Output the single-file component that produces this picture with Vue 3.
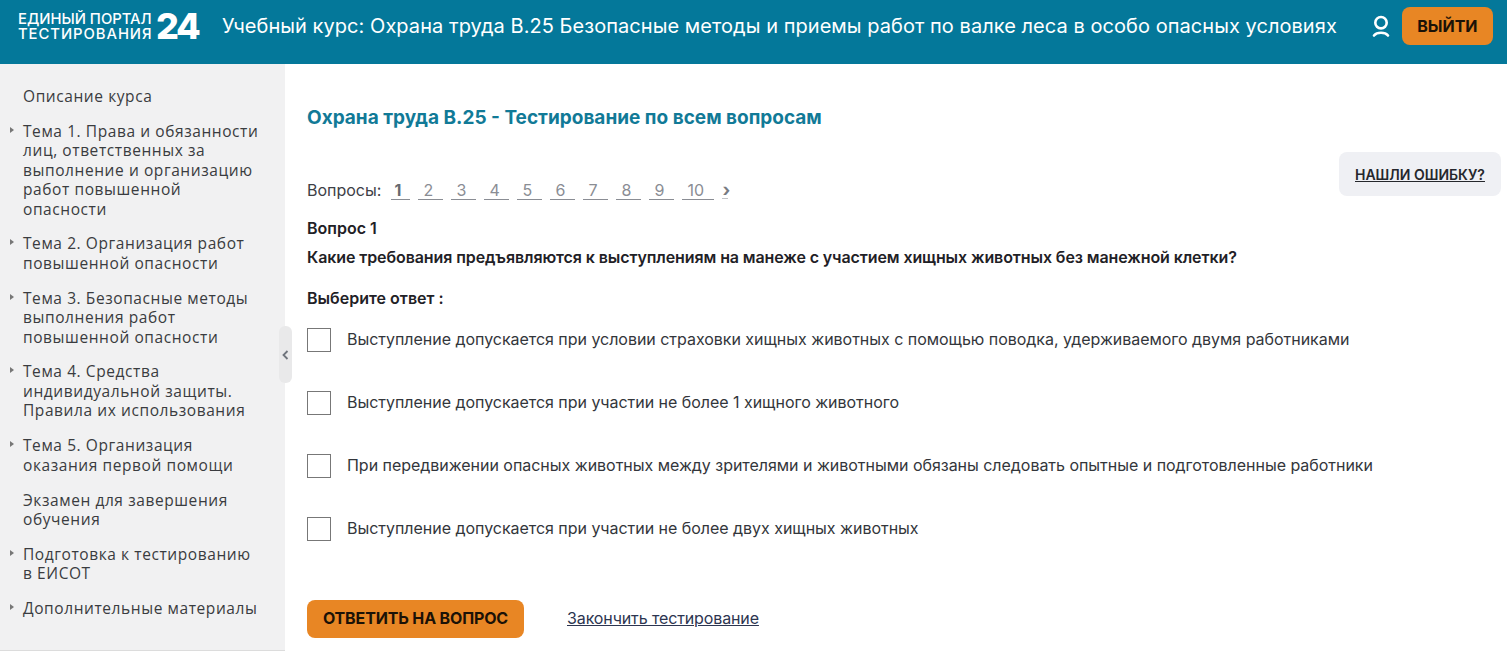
<script setup>
const topics = [
  { title: "Описание курса", arrow: false },
  { title: "Тема 1. Права и обязанности лиц, ответственных за выполнение и организацию работ повышенной опасности", arrow: true },
  { title: "Тема 2. Организация работ повышенной опасности", arrow: true },
  { title: "Тема 3. Безопасные методы выполнения работ повышенной опасности", arrow: true },
  { title: "Тема 4. Средства индивидуальной защиты. Правила их использования", arrow: true },
  { title: "Тема 5. Организация оказания первой помощи", arrow: true },
  { title: "Экзамен для завершения обучения", arrow: false },
  { title: "Подготовка к тестированию в ЕИСОТ", arrow: true },
  { title: "Дополнительные материалы", arrow: true },
];

const pages = ["1", "2", "3", "4", "5", "6", "7", "8", "9", "10"];

const answers = [
  "Выступление допускается при условии страховки хищных животных с помощью поводка, удерживаемого двумя работниками",
  "Выступление допускается при участии не более 1 хищного животного",
  "При передвижении опасных животных между зрителями и животными обязаны следовать опытные и подготовленные работники",
  "Выступление допускается при участии не более двух хищных животных",
];
</script>

<template>
  <div class="page">
    <header class="header">
      <div class="logo">
        <div class="logo-text">
          <div class="logo-top">ЕДИНЫЙ ПОРТАЛ</div>
          <div class="logo-bottom">ТЕСТИРОВАНИЯ</div>
        </div>
        <div class="logo-num">24</div>
      </div>
      <div class="course">Учебный курс: Охрана труда В.25 Безопасные методы и приемы работ по валке леса в особо опасных условиях</div>
      <svg class="user" width="20" height="24" viewBox="0 0 20 24" fill="none" stroke="#fff" stroke-linecap="round">
        <circle cx="10" cy="8.7" r="5.7" stroke-width="2.6" />
        <path d="M3 21.5C6 17.8 14 17.8 17 21.5" stroke-width="2.6" />
      </svg>
      <button class="btn exit">ВЫЙТИ</button>
    </header>

    <div class="body">
      <aside class="sidebar">
        <div v-for="t in topics" :key="t.title" class="topic" :class="{ 'has-arrow': t.arrow }">{{ t.title }}</div>
        <div class="collapse">
          <svg width="8" height="10" viewBox="0 0 8 10" fill="none" stroke="#6f747c" stroke-width="1.8"><path d="M5.5 1L1.5 5l4 4" /></svg>
        </div>
      </aside>

      <main class="main">
        <h1 class="title">Охрана труда В.25 - Тестирование по всем вопросам</h1>

        <div class="toolbar">
          <div class="pager">
            <span class="pager-label">Вопросы:</span>
            <a v-for="(p, i) in pages" :key="p" class="pager-link" :class="{ current: i === 0, wide: p.length > 1 }">{{ p }}</a>
            <a class="pager-next">›</a>
          </div>
          <a class="report">НАШЛИ ОШИБКУ?</a>
        </div>

        <div class="q-num">Вопрос 1</div>
        <div class="q-text">Какие требования предъявляются к выступлениям на манеже с участием хищных животных без манежной клетки?</div>
        <div class="q-hint">Выберите ответ :</div>

        <div class="answers">
          <label v-for="a in answers" :key="a" class="answer">
            <span class="box"></span>
            <span class="answer-text">{{ a }}</span>
          </label>
        </div>

        <div class="actions">
          <button class="btn submit">ОТВЕТИТЬ НА ВОПРОС</button>
          <a class="finish">Закончить тестирование</a>
        </div>
      </main>
    </div>
  </div>
</template>

<style>
html, body { margin: 0; background: #fff; overflow: hidden; }
</style>

<style scoped>
.page { width: 1507px; height: 652px; overflow: hidden; font-family: Inter, "Liberation Sans", sans-serif; color: #22252b; }

.header { height: 64px; background: #04789a; display: flex; align-items: center; padding: 0 14px 13px 18px; box-sizing: border-box; color: #fff; }
.logo { display: flex; align-items: center; width: 204px; flex-shrink: 0; }
.logo-text { width: 138px; padding-top: 3px; white-space: nowrap; font-weight: 500; line-height: 15px; }
.logo-top { font-size: 14.8px; }
.logo-bottom { font-size: 14.8px; letter-spacing: 0.95px; }
.logo-num { font-size: 36px; line-height: 36px; font-weight: 800; letter-spacing: -2.4px; }
.course { font-size: 20px; font-weight: 400; white-space: nowrap; letter-spacing: 0.05px; }
.user { margin-left: 34px; flex-shrink: 0; }
.btn { border: 0; background: #e88624; color: #1b1207; font-family: inherit; font-weight: 700; border-radius: 8px; padding: 0; }
.exit { width: 91px; height: 38px; margin-left: 11px; font-size: 16px; flex-shrink: 0; }

.body { display: flex; height: 588px; }
.sidebar { position: relative; width: 285px; height: 587px; flex-shrink: 0; background: #f1f1f2; border-bottom: 1px solid #dcdcdc; padding: 23px 24px 0 23px; box-sizing: border-box; font-family: "Open Sans", sans-serif; font-size: 15.5px; line-height: 19.4px; color: #3a3c40; letter-spacing: 0.58px; }
.topic { position: relative; margin-bottom: 15.5px; }
.topic.has-arrow::before { content: ""; position: absolute; left: -13px; top: 5px; border-left: 4px solid #777; border-top: 3.5px solid transparent; border-bottom: 3.5px solid transparent; }
.collapse { position: absolute; right: -7px; top: 262px; width: 13px; height: 57px; border-radius: 6px; background: #e9e9ea; display: flex; align-items: center; justify-content: center; }

.main { flex: 1; padding: 0 6px 0 22px; min-width: 0; }
.title { margin: 42px 0 0; font-size: 19px; line-height: 24px; font-weight: 700; color: #117a97; }
.toolbar { display: flex; justify-content: space-between; align-items: flex-start; margin-top: 22px; height: 44px; }
.pager { display: flex; align-items: baseline; margin-top: 27px; font-size: 16px; line-height: 22px; color: #3d4046; }
.pager-label { margin-right: 10px; }
.pager-link { width: 25px; box-sizing: border-box; padding-left: 5px; margin-right: 8px; color: #8a8d94; border-bottom: 1px solid #8a8d94; line-height: 17px; }
.pager-link.current { width: 19px; padding-left: 3px; font-weight: 700; color: #666a71; }
.pager-link.wide { width: 32px; }
.pager-next { font-weight: 700; color: #777b82; font-size: 18px; line-height: 17px; width: 6px; border-bottom: 1px solid #c0c2c6; }
.report { width: 162px; height: 44px; background: #eff0f4; border-radius: 8px; display: flex; align-items: center; justify-content: center; font-size: 14px; font-weight: 600; text-decoration: underline; color: #25272c; }

.q-num { margin-top: 21px; font-size: 16px; line-height: 22px; font-weight: 600; color: #1f2126; }
.q-text { margin-top: 7px; font-size: 16px; line-height: 22px; font-weight: 600; color: #1f2126; white-space: nowrap; letter-spacing: -0.1px; }
.q-hint { margin-top: 19px; font-size: 16px; line-height: 22px; font-weight: 600; color: #1f2126; }
.answers { margin-top: 19px; display: flex; flex-direction: column; gap: 39px; }
.answer { display: flex; align-items: center; gap: 16px; height: 24px; font-size: 16px; color: #33363b; white-space: nowrap; letter-spacing: -0.03px; }
.answer-text { padding-bottom: 2px; }
.box { width: 22px; height: 22px; border: 1px solid #777; background: #fff; flex-shrink: 0; }
.actions { display: flex; align-items: center; margin-top: 59px; }
.submit { width: 217px; height: 38px; padding-bottom: 2px; font-size: 16px; letter-spacing: -0.15px; }
.finish { margin-left: 43px; padding-bottom: 2px; font-size: 16px; color: #2c3550; text-decoration: underline; letter-spacing: -0.12px; }
</style>
